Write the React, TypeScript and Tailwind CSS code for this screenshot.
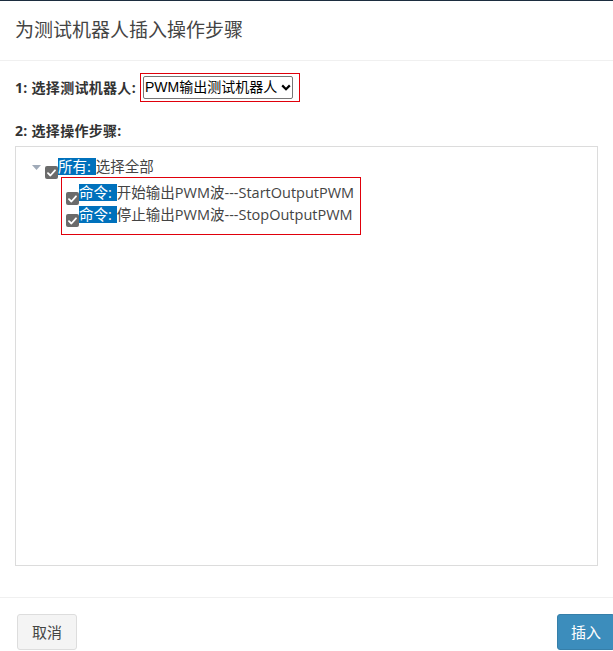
import React from "react";

const FONT = "font-['Open_Sans','Noto_Sans_CJK_SC',sans-serif]";

function Check() {
  return (
    <span className="flex h-[13px] w-[13px] shrink-0 items-center justify-center rounded-[2px] bg-[#6b6b6b]">
      <svg width="9" height="8" viewBox="0 0 9 8" fill="none">
        <path d="M1 4.2 L3.4 6.5 L8 1.3" stroke="#fff" strokeWidth="1.8" strokeLinecap="round" strokeLinejoin="round" />
      </svg>
    </span>
  );
}

function Tag({ children }: { children: React.ReactNode }) {
  return (
    <span className="h-[17px] bg-[#0071bc] pr-[5px] leading-[17px] text-white">{children}</span>
  );
}

const steps = [
  { name: "开始输出PWM波", code: "StartOutputPWM" },
  { name: "停止输出PWM波", code: "StopOutputPWM" },
];

export default function App() {
  return (
    <div className={`flex h-[651px] w-[613px] flex-col overflow-hidden bg-white ${FONT}`}>
      <div className="h-px bg-[#1c2d3f]" />

      {/* header */}
      <div className="border-b border-[#f0f0f0] px-[15px] pt-[16px] pb-[17px]">
        <h4 className="text-[19px] leading-[26px] text-[#444]">为测试机器人插入操作步骤</h4>
      </div>

      {/* body */}
      <div className="px-[15px] pt-[12px] pb-[31px]">
        <div className="flex items-center text-[14px] text-[#333]">
          <span className="font-bold tracking-[0.3px]">1: 选择测试机器人:</span>
          <span className="ml-[4px] flex border border-[#e0000b] pt-[2px] pr-[6px] pb-[2px] pl-[2px]">
            <span className="flex h-[23px] w-[150px] items-center justify-between whitespace-nowrap rounded-[2px] border border-[#767676] pl-[1px] pr-[1px] font-['Liberation_Sans','Noto_Sans_CJK_SC',sans-serif] text-[14px] leading-[21px] text-black">
              PWM输出测试机器人
              <svg className="shrink-0" width="10" height="7" viewBox="0 0 10 7" fill="none">
                <path d="M1.2 1.4 L5 5.2 L8.8 1.4" stroke="#000" strokeWidth="2.2" />
              </svg>
            </span>
          </span>
        </div>

        <div className="mt-[19px] text-[14px] leading-[20px] font-bold tracking-[0.3px] text-[#333]">2: 选择操作步骤:</div>

        <div className="mt-[5px] h-[420px] border border-[#dcdcdc] pt-[9px] text-[14.5px] text-[#444]">
          <div className="flex h-[21px] items-start pl-[16px]">
            <svg className="mt-[9px] shrink-0" width="9" height="5" viewBox="0 0 9 5">
              <polygon points="0,0 9,0 4.5,5" fill="#a0aab8" />
            </svg>
            <span className="mt-[10px] ml-[4px]">
              <Check />
            </span>
            <span className="mt-[2px] flex whitespace-nowrap leading-[17px]">
              <Tag>所有:</Tag>
              <span>选择全部</span>
            </span>
          </div>

          <div className="ml-[45px] w-[300px] border border-[#e0000b] pt-[6px] pb-[6px] pl-[4px]">
            {steps.map((s) => (
              <div key={s.code} className="flex h-[22px] items-start">
                <span className="mt-[8px]">
                  <Check />
                </span>
                <span className="flex whitespace-nowrap leading-[17px]">
                  <Tag>命令:</Tag>
                  <span>
                    {s.name}---{s.code}
                  </span>
                </span>
              </div>
            ))}
          </div>
        </div>
      </div>

      {/* footer */}
      <div className="flex items-start justify-between border-t border-[#f0f0f0] pt-[16px] pl-[17px]">
        <button className="h-[36px] w-[60px] rounded-[3px] border border-[#dddddd] bg-[#f4f4f4] text-[15px] text-[#444]">
          取消
        </button>
        <button className="-mr-[2px] h-[36px] w-[58px] rounded-[3px] border border-[#367fa9] bg-[#3c8dbc] text-[15px] text-white">
          插入
        </button>
      </div>
    </div>
  );
}
